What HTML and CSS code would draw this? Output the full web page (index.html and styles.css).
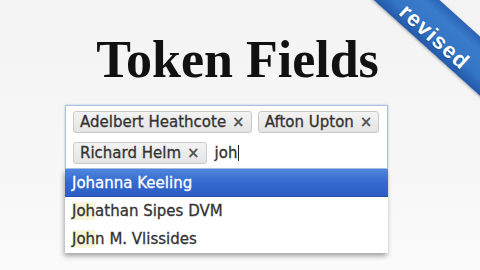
FILE: index.html
```html
<!DOCTYPE html>
<html>
<head>
<meta charset="utf-8">
<link rel="stylesheet" href="styles.css">
</head>
<body>
<div class="page">
  <h1 class="title">Token Fields</h1>
  <div class="widget">
    <div class="field">
      <span class="token"><span class="label">Adelbert Heathcote</span><span class="x">×</span></span>
      <span class="token"><span class="label">Afton Upton</span><span class="x">×</span></span>
      <span class="token"><span class="label">Richard Helm</span><span class="x">×</span></span>
      <span class="input">joh<span class="caret"></span></span>
    </div>
    <ul class="menu">
      <li class="item selected">Johanna Keeling</li>
      <li class="item"><span class="match">Joh</span>athan Sipes DVM</li>
      <li class="item"><span class="match">Joh</span>n M. Vlissides</li>
    </ul>
  </div>
  <div class="ribbon"><span class="ribbon-text">revised</span></div>
</div>
</body>
</html>
```

FILE: styles.css
```css
html, body {
  margin: 0;
  padding: 0;
}
body {
  width: 480px;
  height: 270px;
  overflow: hidden;
  background: linear-gradient(#f3f3f3, #f7f7f7 60%, #fafafa);
  font-family: "DejaVu Sans", "Liberation Sans", sans-serif;
}
.page {
  position: relative;
  width: 480px;
  height: 270px;
  padding-top: 34px;
  box-sizing: border-box;
  overflow: hidden;
}
.title {
  margin: 0;
  padding-right: 5px;
  font-family: "Liberation Serif", serif;
  font-weight: bold;
  font-size: 52px;
  line-height: 52px;
  text-align: center;
  color: #111;
}
.widget {
  margin: 19px 0 0 65px;
  width: 323px;
}
.field {
  display: flex;
  flex-wrap: wrap;
  align-items: center;
  gap: 9px 6px;
  padding: 5px 6px 4px 7px;
  background: #fff;
  border: 1px solid #a9c2e6;
  box-shadow: 0 0 2px rgba(110, 150, 215, 0.6);
}
.token {
  display: inline-flex;
  align-items: center;
  height: 22px;
  box-sizing: border-box;
  padding: 0 6px 0 6px;
  background: linear-gradient(#f3f3f3, #e4e4e4);
  border: 1px solid #c9c9c9;
  border-radius: 3px;
  color: #333;
  font-size: 15px;
  -webkit-text-stroke: 0.3px #333;
}
.x {
  margin-left: 6px;
  font-size: 15px;
  font-weight: bold;
  color: #555;
  -webkit-text-stroke: 0;
}
.input {
  display: inline-flex;
  align-items: center;
  margin-left: 2px;
  font-size: 15px;
  color: #333;
  height: 22px;
  -webkit-text-stroke: 0.3px #333;
}
.caret {
  display: inline-block;
  width: 1px;
  height: 16px;
  background: #222;
  margin-left: 1px;
}
.menu {
  list-style: none;
  margin: 0;
  padding: 0;
  background: #fff;
  box-shadow: -1px 3px 5px rgba(0, 0, 0, 0.35);
}
.item {
  height: 28px;
  line-height: 28px;
  padding-left: 7px;
  font-size: 15px;
  color: #333;
  -webkit-text-stroke: 0.3px #333;
}
.item.selected {
  color: #fff;
  -webkit-text-stroke: 0.3px #fff;
  background: linear-gradient(#4f86dc, #3469cf 50%, #2c5ec6);
  border-bottom: 1px solid #244fa8;
  height: 27px;
  line-height: 29px;
}
.match {
  background: #f8f6d8;
}
.ribbon {
  position: absolute;
  left: 331px;
  top: 9px;
  width: 220px;
  height: 44px;
  box-sizing: border-box;
  padding-top: 18px;
  display: flex;
  justify-content: center;
  align-items: center;
  transform: rotate(42deg);
  background: linear-gradient(#2a62b4, #3a7bcc 25%, #3475c6 70%, #2458a8);
  box-shadow: 0 1px 3px rgba(0, 0, 0, 0.3);
}
.ribbon-text {
  display: block;
  height: 22px;
  line-height: 22px;
  margin-left: -2px;
  color: #fff;
  font-family: "Liberation Sans", sans-serif;
  font-weight: bold;
  font-size: 22px;
  letter-spacing: 1.2px;
  text-shadow: 0 1px 1px rgba(0, 0, 0, 0.3);
}
```
